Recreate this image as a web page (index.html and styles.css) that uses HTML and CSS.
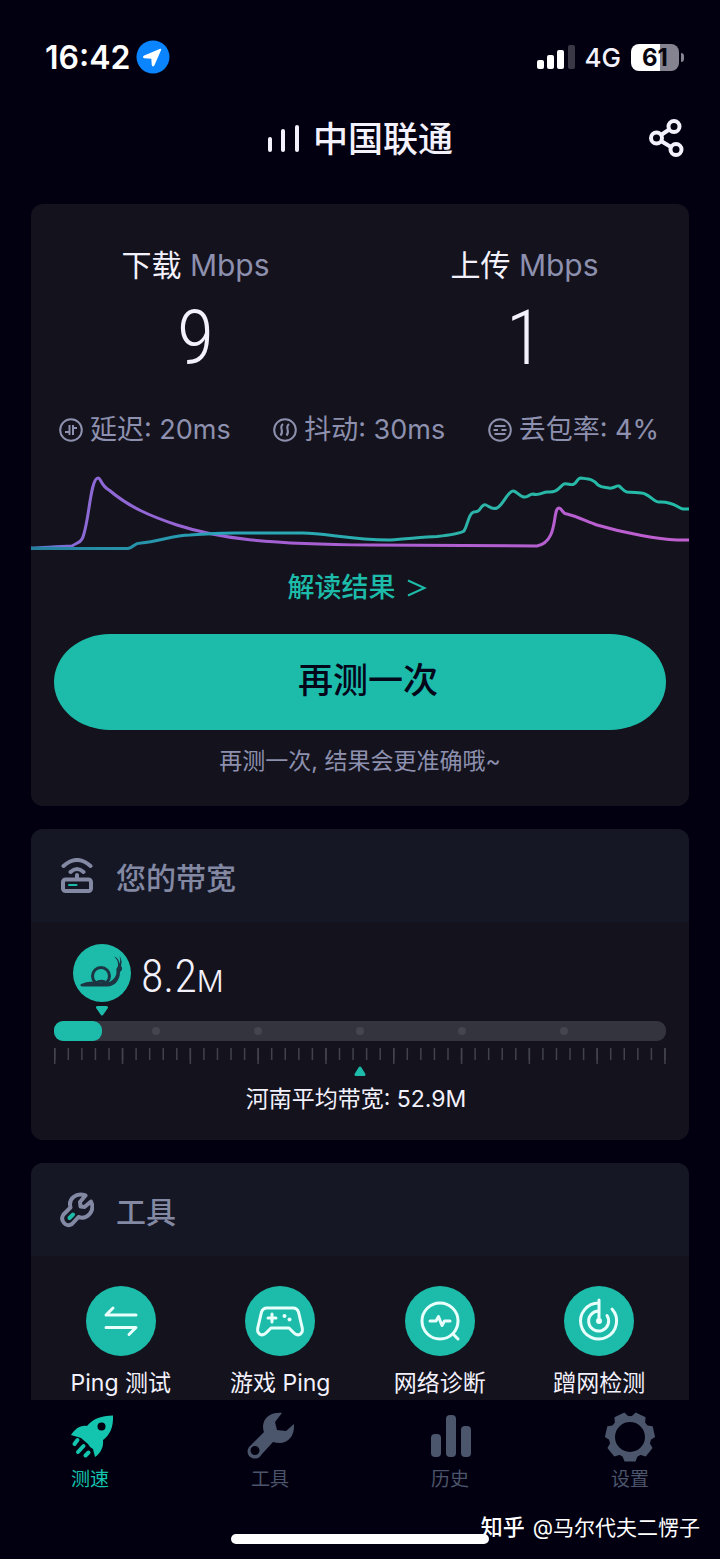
FILE: index.html
```
<!DOCTYPE html>
<html lang="zh-CN">
<head>
    <meta charset="utf-8">
    <meta name="viewport" content="width=device-width, initial-scale=1">
    <title>测速</title>
    <link rel="stylesheet" href="styles.css">
</head>

<body>

<div class="status-bar">
    <div class="status-left">
        <span class="time">16:42</span>
        <svg class="location" viewBox="0 0 34 34">
            <circle cx="17" cy="17" r="16.5" fill="#0a84ff"/>
            <path d="M24.5 9.5L17.8 25Q17 26.4 16.5 24.800L16 18L8.500 17.500Q7 17 8.500 16.200Z" fill="#fff" stroke="#fff" stroke-width="1.500" stroke-linejoin="round"/>
        </svg>
    </div>
    <div class="status-right">
        <svg class="signal" viewBox="0 0 38 24">
            <rect x="0" y="15" width="7" height="9" rx="2" fill="#fff"/>
            <rect x="10" y="10" width="7" height="14" rx="2" fill="#fff"/>
            <rect x="20" y="5" width="7" height="19" rx="2" fill="#fff"/>
            <rect x="31" y="0" width="7" height="24" rx="2" fill="#3a3845"/>
        </svg>
        <span class="network">4G</span>
        <div class="battery"><span>61</span></div>
    </div>
</div>

<header class="top">
    <h1>
        <svg class="bars" viewBox="0 0 32 28" fill="none" stroke="#f3f1fc" stroke-width="4" stroke-linecap="round">
            <path d="M3 14V25M16 6V25M30 2V25"/>
        </svg>
        中国联通
    </h1>
    <button class="share" type="button" aria-label="分享">
        <svg viewBox="0 0 36 40" fill="none" stroke="#f3f1fc" stroke-width="4">
            <path d="M12 16L21 10M12 22L22 28"/>
            <circle cx="7.500" cy="19" r="5.500"/>
            <circle cx="25" cy="7.500" r="5.500"/>
            <circle cx="27" cy="30.500" r="5.500"/>
        </svg>
    </button>
</header>

<main>

    <section class="card result">
        <div class="speeds">
            <div class="speed">
                <h2>下载 <span>Mbps</span></h2>
                <p>9</p>
            </div>
            <div class="speed">
                <h2>上传 <span>Mbps</span></h2>
                <p>1</p>
            </div>
        </div>

        <ul class="stats">
            <li>
                <svg viewBox="0 0 24 24" fill="none" stroke="currentColor" stroke-width="2">
                    <circle cx="12" cy="12" r="10.800"/>
                    <path d="M6 14H10M10.500 7V17M14 17V7M14 10H18"/>
                </svg>
                延迟: 20ms
            </li>
            <li>
                <svg viewBox="0 0 24 24" fill="none" stroke="currentColor" stroke-width="2">
                    <circle cx="12" cy="12" r="10.800"/>
                    <path d="M10 6C5 9.500 12 12.500 7.500 17.500M16 6C11 9.500 18 12.500 13.500 17.500"/>
                </svg>
                抖动: 30ms
            </li>
            <li>
                <svg viewBox="0 0 24 24" fill="none" stroke="currentColor" stroke-width="2">
                    <circle cx="12" cy="12" r="10.800"/>
                    <path d="M6.500 8H17.500M5.500 12H10M13.500 12H18.500M6.500 16H17.500"/>
                </svg>
                丢包率: 4%
            </li>
        </ul>

        <svg class="chart" viewBox="0 0 658 90" fill="none" stroke-width="3" stroke-linejoin="round">
            <defs>
                <linearGradient id="up" gradientUnits="userSpaceOnUse" x1="0" y1="0" x2="658" y2="0">
                    <stop offset="0" stop-color="#4f7fd0"/>
                    <stop offset="0.070" stop-color="#8b6ad6"/>
                    <stop offset="0.400" stop-color="#a55fd2"/>
                    <stop offset="1" stop-color="#c05fd0"/>
                </linearGradient>
                <linearGradient id="down" gradientUnits="userSpaceOnUse" x1="0" y1="0" x2="658" y2="0">
                    <stop offset="0" stop-color="#257f9c"/>
                    <stop offset="0.300" stop-color="#29a5b8"/>
                    <stop offset="0.700" stop-color="#2cb5a8"/>
                    <stop offset="1" stop-color="#22bda8"/>
                </linearGradient>
            </defs>
            <path stroke="url(#up)" d="M0 78C12 78 22 76.500 41 76C45 73 49 73 51 69C58 56 59 8 67 8C70 8 70 16 78 20C98 37 119 46 146 55C186 68 230 74 339 75L506 76C528 72 521 38 528 38C531 38 531 44 536 44C545 46 555 51 566 55C596 64 628 69 646 70H658"/>
            <path stroke="url(#down)" d="M0 78.500H97C103 77 103 73 110 73C127 72 142 65 159 65C180 64 190 62.500 212 63H272C295 63 318 70 359 70C376 69 392 67 406 66.500C420 65 430 63 433 61C437 54 437 47 441 43C444 40 446 44 449 39C451 36 453 34 455 35C459 37 461 40 466 38C472 35 477 21 482 21C486 21 490 28 494 27C498 27 498 24 502 24C508 26 512 22 516 22C527 23 528 17 533 14C537 13 540 16 543 14C546 13 546 8 550 8C559 9 562 9 567 15C571 18 575 17 578 18C583 19 585 15 588 16C591 18 592 21 596 22C604 23 610 22 614 24C620 26 623 32 628 32C642 31 647 38 652 39H658"/>
        </svg>

        <a class="explain" href="#">解读结果 <svg viewBox="0 0 20 18" fill="none" stroke="currentColor" stroke-width="2"><path d="M1 1.500L17.500 9L1 16.500"/></svg></a>
        <button class="again" type="button">再测一次</button>
        <p class="hint">再测一次, 结果会更准确哦~</p>
    </section>

    <section class="card">
        <h2 class="card-head">
            <svg viewBox="0 0 34 36" fill="none" stroke="currentColor" stroke-width="4" stroke-linecap="round" stroke-linejoin="round">
                <path d="M3.500 8Q17 -4 30.500 8M10.500 14Q17 8 23.500 14M17 17V21"/>
                <rect x="3" y="21.500" width="28" height="11.500" rx="2.500"/>
                <path stroke="#1dbcaa" stroke-width="2" d="M9 27H16.500"/>
            </svg>
            您的带宽
        </h2>
        <div class="bandwidth">
            <div class="current">
                <svg class="snail" viewBox="0 0 58 72">
                    <circle cx="29" cy="29" r="29" fill="#1dbcaa"/>
                    <path fill="#1d3443" d="M8 40Q13 37.500 19 37.500L28 39.500C37 40 43.500 34 43.500 28Q43 24 45 22Q45.500 16 41 12.500Q46 14 46.500 20Q48 16 46.500 12Q49.500 16 48 22Q50 24 48.500 26.500L47 28C47 36 42 42.500 34 42.500H10Q6 42 8 40Z"/>
                    <circle cx="28" cy="32" r="8.500" fill="#1dbcaa" stroke="#1d3443" stroke-width="3"/>
                    <path d="M23 39Q27 36 32 38" fill="none" stroke="#1d3443" stroke-width="3"/>
                    <path d="M24.500 63.500H33.500L29 70Z" fill="#1dbcaa" stroke="#1dbcaa" stroke-width="3" stroke-linejoin="round"/>
                </svg>
                <p class="value">8.2<small>M</small></p>
            </div>
            <div class="track">
                <div class="fill" style="width: 7.8%"></div>
                <i></i><i></i><i></i><i></i><i></i>
            </div>
            <svg class="ruler" viewBox="0 0 612 16" stroke="#42424d">
                <path stroke-width="12" stroke-dasharray="1.500 12.060" d="M0 6H612"/>
                <path stroke-width="16" stroke-dasharray="1.500 66.300" d="M0 8H612"/>
            </svg>
            <svg class="marker" viewBox="0 0 12 11">
                <path d="M2 9.500H10L6 3Z" fill="#1dbcaa" stroke="#1dbcaa" stroke-width="3" stroke-linejoin="round"/>
            </svg>
            <p class="average">河南平均带宽: 52.9M</p>
        </div>
    </section>

    <section class="card">
        <h2 class="card-head">
            <svg viewBox="0 0 34 36" fill="none" stroke="currentColor" stroke-width="4" stroke-linejoin="round" stroke-linecap="round">
                <path d="M25.500 3.500C16 0 8 7 10.500 15.500L3.500 22.500C-0.500 28.500 6 36 12 32L18.500 25C27 28 35.500 19 31 9.500L24.500 15L20.500 14.500L20 10Z"/>
                <path stroke="#1dbcaa" stroke-width="4" d="M9.500 26L13 22.500"/>
            </svg>
            工具
        </h2>
        <div class="tools">
            <a href="#">
                <svg viewBox="0 0 70 70" fill="none" stroke="#e8fffc" stroke-width="3" stroke-linecap="round" stroke-linejoin="round">
                    <circle cx="35" cy="35" r="35" fill="#1dbcaa" stroke="none"/>
                    <path d="M50 29H20L27 22M20 41.500H50L43 48.500"/>
                </svg>
                Ping 测试
            </a>
            <a href="#">
                <svg viewBox="0 0 70 70" fill="none" stroke="#e8fffc" stroke-width="3" stroke-linecap="round" stroke-linejoin="round">
                    <circle cx="35" cy="35" r="35" fill="#1dbcaa" stroke="none"/>
                    <path d="M22 22H48Q52 22 53.500 26L57 41C59 48 53 51 49 47L44 42H26L21 47C17 51 11 48 13 41L16.500 26Q18 22 22 22ZM27 28V36M23 32H31"/>
                    <g fill="#e8fffc" stroke="none"><circle cx="39.500" cy="30" r="2"/><circle cx="44.500" cy="33.500" r="2"/></g>
                </svg>
                游戏 Ping
            </a>
            <a href="#">
                <svg viewBox="0 0 70 70" fill="none" stroke="#e8fffc" stroke-width="3" stroke-linecap="round" stroke-linejoin="round">
                    <circle cx="35" cy="35" r="35" fill="#1dbcaa" stroke="none"/>
                    <circle cx="35" cy="35" r="18"/>
                    <path d="M25 35H31L33.500 30.500L37 39.500L39.500 35H45M48 48L53 53"/>
                </svg>
                网络诊断
            </a>
            <a href="#">
                <svg viewBox="0 0 70 70" fill="none" stroke="#e8fffc" stroke-width="3" stroke-linecap="round">
                    <circle cx="35" cy="35" r="35" fill="#1dbcaa" stroke="none"/>
                    <path d="M35 14V35M35 17A18 18 0 1 0 48 23M35 25A10 10 0 1 0 43 29.500"/>
                    <circle cx="35" cy="35" r="3" fill="#e8fffc" stroke="none"/>
                </svg>
                蹭网检测
            </a>
        </div>
    </section>

</main>

<footer>
    <nav class="tabs">
        <a class="active" href="#">
            <svg viewBox="0 0 54 50" fill="currentColor">
                <path fill-rule="evenodd" d="M50 3.500C50.500 15 47 23 40 28C41 35 37 42 32 45L30 37Q27 36 25 32L18 26L8 23C12 17 17 13 24 14C31 6 38 4 50 3.500ZM38.500 10.500A4 4 0 1 0 38.500 18.500A4 4 0 1 0 38.500 10.500Z"/>
                <path fill="none" stroke="currentColor" stroke-width="4" stroke-linecap="round" d="M14.500 28L11.500 32M20.500 34L15 40M25.500 40.500L22.500 43.500"/>
            </svg>
            测速
        </a>
        <a href="#">
            <svg viewBox="0 0 54 50" fill="currentColor">
                <path fill-rule="evenodd" d="M39 1C30 0 21 4 20 14Q20 18 21 20L7 34C1 40 7 49 15 46Q17 45 19 42L30 30C43 34 52 26 51 12L43 19L34 18L32 10ZM12 34A4.500 4.500 0 1 0 12 43A4.500 4.500 0 1 0 12 34Z"/>
            </svg>
            工具
        </a>
        <a href="#">
            <svg viewBox="0 0 54 50" fill="currentColor">
                <rect x="8" y="22" width="10" height="23" rx="4"/>
                <rect x="23" y="3" width="10" height="42" rx="4"/>
                <rect x="38" y="14" width="10" height="31" rx="4"/>
            </svg>
            历史
        </a>
        <a href="#">
            <svg viewBox="0 0 54 50" fill="currentColor">
                <circle cx="27" cy="25" r="18" fill="none" stroke="currentColor" stroke-width="6"/>
                <g transform="translate(27 25)">
                    <path id="tooth" d="M-8 18L-5.500 24.500H5.500L8 18Z"/>
                    <use href="#tooth" transform="rotate(51.430)"/>
                    <use href="#tooth" transform="rotate(102.860)"/>
                    <use href="#tooth" transform="rotate(154.290)"/>
                    <use href="#tooth" transform="rotate(205.710)"/>
                    <use href="#tooth" transform="rotate(257.140)"/>
                    <use href="#tooth" transform="rotate(308.570)"/>
                </g>
            </svg>
            设置
        </a>
    </nav>
    <div class="home-indicator"></div>
    <p class="watermark"><b>知乎</b> @马尔代夫二愣子</p>
</footer>

</body>
</html>
```
FILE: styles.css
```
* {
    box-sizing: border-box;
    margin: 0;
    padding: 0;
}

body {
    display: flex;
    flex-direction: column;
    height: 100vh;
    overflow: hidden;
    background-color: #020010;
    color: #f3f1fc;
    font-family: Inter, "Noto Sans CJK SC", sans-serif;
}

a {
    color: inherit;
    text-decoration: none;
}

svg {
    flex: none;
}

.status-bar {
    display: flex;
    justify-content: space-between;
    align-items: center;
    height: 114px;
    padding: 0 36px 0 45px;
    flex: none;
}

.status-left,
.status-right {
    display: flex;
    align-items: center;
}

.time {
    font-size: 32px;
    font-weight: 600;
    color: #fff;
}

.location {
    width: 34px;
    height: 34px;
    margin-left: 6px;
}

.signal {
    width: 38px;
    height: 24px;
}

.network {
    font-size: 26px;
    font-weight: 500;
    margin: 0 10px;
}

.battery {
    position: relative;
    width: 48px;
    height: 27px;
    margin-right: 5px;
    border-radius: 8px;
    background: linear-gradient(to right, #fff 61%, #85838f 61%);
    color: #08060f;
    font-size: 24px;
    font-weight: 700;
    line-height: 27px;
    text-align: center;
}

.battery::after {
    content: "";
    position: absolute;
    right: -5px;
    top: 9px;
    width: 3px;
    height: 9px;
    border-radius: 0 4px 4px 0;
    background-color: #85838f;
}

.top {
    display: grid;
    grid-template-columns: 1fr auto 1fr;
    align-items: center;
    height: 50px;
    padding: 0 35px;
    flex: none;
}

.top h1 {
    grid-column: 2;
    display: flex;
    align-items: center;
    gap: 14px;
    font-size: 35px;
    font-weight: 500;
    line-height: 50px;
}

.bars {
    width: 32px;
    height: 28px;
}

.share {
    justify-self: end;
    border: 0;
    background: none;
    cursor: pointer;
}

.share svg {
    display: block;
    width: 36px;
    height: 40px;
}

main {
    flex: 1;
    min-height: 0;
    overflow: hidden;
    padding: 40px 31px 0;
}

.card {
    overflow: hidden;
    margin-bottom: 23px;
    border-radius: 12px;
    background-color: #14131d;
}

.result {
    padding: 41px 0 25px;
    text-align: center;
}

.speeds {
    display: grid;
    grid-template-columns: 1fr 1fr;
}

.speed h2 {
    font-size: 30px;
    font-weight: 400;
    line-height: 40px;
}

.speed h2 span {
    color: #8d90ae;
}

.speed p {
    margin-top: 15px;
    font-family: "Liberation Sans Narrow", "Roboto Condensed", Roboto, sans-serif;
    font-size: 76px;
    font-weight: 300;
    line-height: 76px;
}

.stats {
    display: flex;
    justify-content: space-between;
    margin-top: 34px;
    padding: 0 30px 0 28px;
    list-style: none;
    color: #8d90ae;
    font-size: 27px;
    line-height: 40px;
}

.stats li {
    display: flex;
    align-items: center;
    gap: 7px;
}

.stats svg {
    width: 24px;
    height: 24px;
}

.chart {
    display: block;
    width: 100%;
    margin-top: 20px;
}

.explain {
    display: inline-block;
    margin-top: 8px;
    padding-right: 6px;
    color: #1dbcaa;
    font-size: 27px;
    font-weight: 500;
    line-height: 40px;
}

.explain svg {
    width: 20px;
    height: 18px;
    margin-left: 4px;
}

.again {
    display: block;
    width: calc(100% - 46px);
    height: 96px;
    margin: 26px auto 0;
    padding-left: 16px;
    border: 0;
    border-radius: 56px / 48px;
    background-color: #1dbcaa;
    color: #04061a;
    font-family: inherit;
    font-size: 35px;
    font-weight: 500;
    line-height: 48px;
    padding-bottom: 4px;
    cursor: pointer;
}

.hint {
    margin-top: 11px;
    color: #8d90ae;
    font-size: 23px;
    line-height: 40px;
}

.card-head {
    display: flex;
    align-items: center;
    gap: 22px;
    height: 93px;
    padding: 0 29px;
    background-color: #151725;
    color: #8388a3;
    font-size: 30px;
    font-weight: 500;
}

.card-head svg {
    width: 34px;
    height: 36px;
}

.bandwidth {
    padding: 22px 23px 25px;
}

.current {
    display: flex;
    gap: 10px;
    padding-left: 19px;
}

.snail {
    width: 58px;
    height: 72px;
}

.value {
    font-family: "Liberation Sans Narrow", "Roboto Condensed", Roboto, sans-serif;
    font-size: 46px;
    font-weight: 300;
    line-height: 64px;
}

.value small {
    font-family: Inter, sans-serif;
    font-size: 30px;
    font-weight: 300;
}

.track {
    position: relative;
    display: flex;
    justify-content: space-between;
    align-items: center;
    height: 20px;
    margin-top: 5px;
    padding: 0 16%;
    border-radius: 9px;
    background-color: #34343f;
}

.track i {
    width: 8px;
    height: 8px;
    border-radius: 50%;
    background-color: #454550;
}

/* filled part lies over the dots */
.fill {
    position: absolute;
    left: 0;
    top: 0;
    height: 100%;
    border-radius: 9px;
    background-color: #1dbcaa;
}

.ruler {
    display: block;
    width: 100%;
    margin-top: 7px;
}

.marker {
    display: block;
    width: 12px;
    height: 11px;
    margin: 1px auto 0;
}

.average {
    margin-top: 7px;
    padding-right: 8px;
    font-size: 23px;
    line-height: 32px;
    text-align: center;
}

.tools {
    display: grid;
    grid-template-columns: repeat(4, 1fr);
    padding: 30px 10px;
}

.tools a {
    display: flex;
    flex-direction: column;
    align-items: center;
    gap: 11px;
    font-size: 23px;
    line-height: 32px;
}

.tools svg {
    width: 70px;
    height: 70px;
}

footer {
    position: relative;
    flex: none;
    height: 159px;
    background-color: #020010;
}

.tabs {
    display: grid;
    grid-template-columns: repeat(4, 1fr);
    padding-top: 12px;
}

.tabs a {
    display: flex;
    flex-direction: column;
    align-items: center;
    gap: 6px;
    color: #4b556b;
    font-size: 19px;
    line-height: 24px;
}

.tabs .active {
    color: #13c4ae;
}

.tabs svg {
    width: 54px;
    height: 50px;
}

.home-indicator {
    width: 258px;
    height: 10px;
    margin: 42px auto 0;
    border-radius: 5px;
    background-color: #fff;
}

.watermark {
    position: absolute;
    right: 20px;
    bottom: 15px;
    color: #fff;
    font-size: 21px;
    line-height: 32px;
}

.watermark b {
    margin-right: 2px;
    font-size: 22px;
    font-weight: 500;
}
```
